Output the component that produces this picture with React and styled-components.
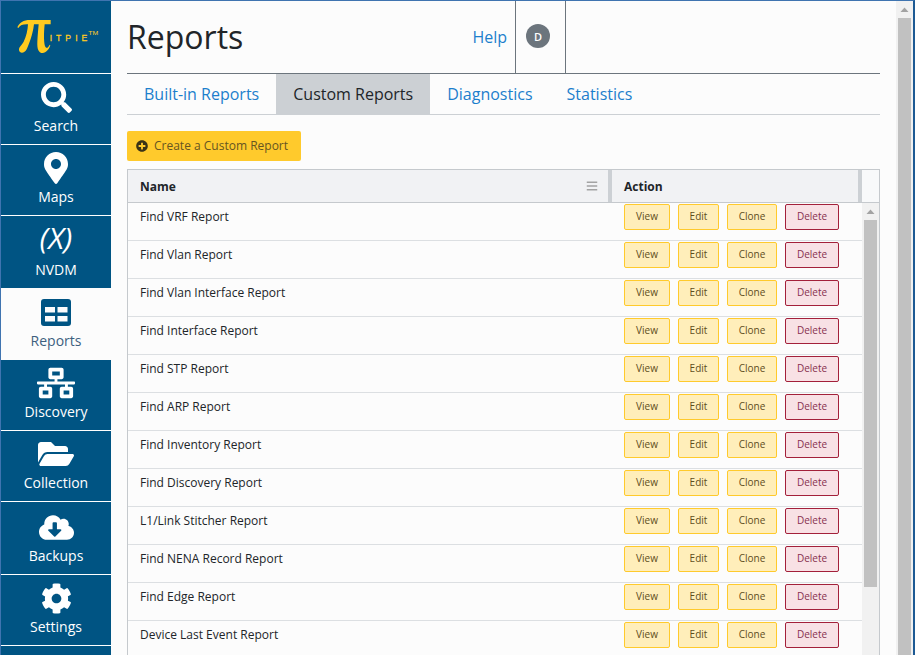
import React from "react";
import styled, { createGlobalStyle } from "styled-components";
import {
  FaSearch,
  FaMapMarkerAlt,
  FaNetworkWired,
  FaFolderOpen,
  FaCloudDownloadAlt,
  FaCog,
  FaPlusCircle,
  FaBars,
} from "react-icons/fa";

const reports = [
  "Find VRF Report",
  "Find Vlan Report",
  "Find Vlan Interface Report",
  "Find Interface Report",
  "Find STP Report",
  "Find ARP Report",
  "Find Inventory Report",
  "Find Discovery Report",
  "L1/Link Stitcher Report",
  "Find NENA Record Report",
  "Find Edge Report",
  "Device Last Event Report",
];

const GlobalStyle = createGlobalStyle`
  html, body {
    margin: 0;
    height: 100%;
    overflow: hidden;
    background: #fcfcfc;
    font-family: "Open Sans", "Liberation Sans", sans-serif;
  }
  * { box-sizing: border-box; }
`;

const Frame = styled.div`
  display: flex;
  height: 655px;
  overflow: hidden;
  border-top: 1px solid #3f74b0;
  border-left: 1px solid #3f74b0;
  border-right: 2px solid #1d5a94;
`;

const Sidebar = styled.nav`
  flex: 0 0 110px;
  background: #005483;
`;

const Logo = styled.div`
  height: 73px;
  padding: 9px 0 0 9px;
  border-bottom: 1px solid #fff;
  svg { display: block; }
`;

const NavItem = styled.a`
  display: flex;
  flex-direction: column;
  align-items: center;
  justify-content: flex-end;
  height: ${(p) => p.$h}px;
  padding-bottom: ${(p) => p.$pb || 8}px;
  border-bottom: 1px solid ${(p) => (p.$flat ? "transparent" : "#fff")};
  background: ${(p) => (p.$active ? "#fcfcfc" : "#005483")};
  color: ${(p) => (p.$active ? "#3d5f7f" : "#fff")};
  font-size: 14px;
  line-height: 20px;
`;

const NavIcon = styled.span`
  display: flex;
  align-items: center;
  justify-content: center;
  height: 32px;
  margin-bottom: 3px;
  color: ${(p) => (p.$active ? "#005483" : "#fff")};
`;

const Variable = styled.span`
  font-size: 30px;
  font-style: italic;
  line-height: 32px;
  margin-top: -6px;
`;

const Main = styled.main`
  flex: 1;
  min-width: 0;
  padding: 0 16px;
`;

// the browser scrollbar, drawn as a column beside what it scrolls
const ScrollBar = styled.div`
  flex: 0 0 17px;
  display: flex;
  flex-direction: column;
  background: #f1f1f1;
  color: #a3a3a3;
`;

const ScrollArrow = styled.svg`
  display: block;
  flex: 0 0 17px;
`;

const ScrollThumb = styled.div`
  height: ${(p) => p.$h}px;
  margin: 0 2px;
  background: #c1c1c1;
`;

const Header = styled.header`
  display: flex;
  align-items: stretch;
  height: 73px;
  border-bottom: 1px solid #6c757d;
  padding-right: 314px;
`;

const Title = styled.h1`
  margin: 0 auto 0 0;
  font-size: 32px;
  font-weight: 400;
  line-height: 72px;
  color: #212529;
`;

const HelpLink = styled.a`
  align-self: center;
  font-size: 16px;
  color: #1c7fcc;
  margin-right: 8px;
`;

const UserCell = styled.div`
  display: flex;
  justify-content: center;
  width: 51px;
  padding: 23px 5px 0 0;
  border-left: 1px solid #6c757d;
  border-right: 1px solid #6c757d;
`;

const Avatar = styled.span`
  display: flex;
  align-items: center;
  justify-content: center;
  width: 24px;
  height: 24px;
  border-radius: 50%;
  background: #6c757d;
  color: #fff;
  font-size: 11px;
  font-weight: 600;
`;

const Tabs = styled.div`
  display: flex;
  height: 41px;
  border-bottom: 1px solid #ccd0d4;
`;

const Tab = styled.a`
  padding: 0 17px;
  font-size: 16px;
  line-height: 40px;
  background: ${(p) => (p.$active ? "#ccd0d4" : "transparent")};
  color: ${(p) => (p.$active ? "#212529" : "#1c7fcc")};
`;

const CreateButton = styled.button`
  display: flex;
  align-items: center;
  gap: 6px;
  height: 30px;
  margin-top: 16px;
  padding: 0 13px 1px 9px;
  border: 0;
  border-radius: 2px;
  background: #ffca2c;
  color: #665522;
  font-family: inherit;
  font-size: 12px;
  svg { color: #3b3316; }
`;

const Table = styled.section`
  margin-top: 8px;
  border: 1px solid #c5c9cd;
  border-bottom: 0;
`;

const HeadRow = styled.div`
  display: flex;
  height: 33px;
  background: #f8f9fa;
  border-bottom: 1px solid #c5c9cd;
`;

const HeadCell = styled.div`
  display: flex;
  align-items: center;
  justify-content: space-between;
  width: ${(p) => p.$w}px;
  padding: 0 10px 0 12px;
  background: #f1f2f4;
  border-right: 4px solid #ccd0d4;
  color: #212529;
  font-size: 12px;
  font-weight: 700;
  svg { color: #a3a3a3; }
`;

const Body = styled.div`
  display: flex;
  height: 475px;
`;

const RowList = styled.div`
  flex: 1;
  min-width: 0;
`;

const Row = styled.div`
  display: flex;
  height: 38px;
  border-bottom: 1px solid #dcdfe2;
`;

const NameCell = styled.div`
  width: 484px;
  padding: 5px 12px 0;
  font-size: 12px;
  line-height: 18px;
  color: #212529;
`;

const Actions = styled.div`
  display: flex;
  gap: 8px;
  padding: 1px 12px 0;
`;

const ActionButton = styled.button`
  width: ${(p) => p.$w}px;
  height: 26px;
  padding: 0 0 2px;
  border: 1px solid ${(p) => (p.$danger ? "#a3203a" : "#ffca2c")};
  border-radius: 2px;
  background: ${(p) => (p.$danger ? "#f8e1e5" : "#ffeeba")};
  color: ${(p) => (p.$danger ? "#87304f" : "#5e4d1c")};
  font-family: inherit;
  font-size: 10px;
`;

const UpArrow = () => (
  <ScrollArrow width="17" height="17" viewBox="0 0 17 17">
    <path d="M8.5 6.5 L12.5 11 H4.5 Z" fill="currentColor" />
  </ScrollArrow>
);

const ReportsIcon = () => (
  <svg width="30" height="27" viewBox="0 0 30 27">
    <rect width="30" height="27" rx="3" fill="#005483" />
    <g fill="#fcfcfc">
      <rect x="4" y="8" width="10" height="5.5" />
      <rect x="16.5" y="8" width="10" height="5.5" />
      <rect x="4" y="17" width="10" height="5.5" />
      <rect x="16.5" y="17" width="10" height="5.5" />
    </g>
  </svg>
);

const LogoMark = () => (
  <svg width="95" height="50" viewBox="0 0 285 150">
    <path
      fill="#ffcb1f"
      d="M22 52 C28 38 40 30 60 30 L122 30 L122 43 L104 43 C101 70 101 105 107 112 C111 116 115 112 119 104 L121 106 C117 118 108 129 98 129 C85 129 81 116 82 95 C83 75 85 55 86 43 L72 43 C68 75 58 100 50 118 C44 130 29 132 27 120 C26 111 35 106 41 95 C49 80 53 60 54 43 L50 43 C38 43 30 46 25 54 Z"
    />
    <text x="119" y="94" fill="#ffcb1f" stroke="#ffcb1f" strokeWidth="0.8" fontFamily="Liberation Sans" fontSize="26" textLength="113" lengthAdjust="spacing">
      ITPIE
    </text>
    <text x="235" y="76" fill="#ffcb1f" fontFamily="Liberation Sans" fontSize="14" textLength="30" lengthAdjust="spacingAndGlyphs">
      TM
    </text>
  </svg>
);

const nav = [
  { label: "Search", h: 71, icon: <FaSearch size={31} /> },
  { label: "Maps", h: 71, icon: <FaMapMarkerAlt size={32} /> },
  { label: "NVDM", h: 72, pb: 7, flat: true, icon: <Variable>(X)</Variable> },
  { label: "Reports", h: 72, flat: true, active: true, icon: <ReportsIcon /> },
  { label: "Discovery", h: 71, icon: <FaNetworkWired size={38} /> },
  { label: "Collection", h: 71, icon: <FaFolderOpen size={36} /> },
  { label: "Backups", h: 73, icon: <FaCloudDownloadAlt size={35} /> },
  { label: "Settings", h: 71, icon: <FaCog size={31} /> },
];

const App = () => {
  return (
    <Frame>
      <GlobalStyle />
      <Sidebar>
        <Logo>
          <LogoMark />
        </Logo>
        {nav.map((item) => (
          <NavItem key={item.label} $h={item.h} $pb={item.pb} $flat={item.flat} $active={item.active}>
            <NavIcon $active={item.active}>{item.icon}</NavIcon>
            {item.label}
          </NavItem>
        ))}
      </Sidebar>
      <Main>
        <Header>
          <Title>Reports</Title>
          <HelpLink>Help</HelpLink>
          <UserCell>
            <Avatar>D</Avatar>
          </UserCell>
        </Header>
        <Tabs>
          <Tab>Built-in Reports</Tab>
          <Tab $active>Custom Reports</Tab>
          <Tab>Diagnostics</Tab>
          <Tab>Statistics</Tab>
        </Tabs>
        <CreateButton>
          <FaPlusCircle size={12} />
          Create a Custom Report
        </CreateButton>
        <Table>
          <HeadRow>
            <HeadCell $w={484}>
              Name
              <FaBars size={12} />
            </HeadCell>
            <HeadCell $w={250}>Action</HeadCell>
          </HeadRow>
          <Body>
            <RowList>
              {reports.map((name) => (
                <Row key={name}>
                  <NameCell>{name}</NameCell>
                  <Actions>
                    <ActionButton $w={46}>View</ActionButton>
                    <ActionButton $w={41}>Edit</ActionButton>
                    <ActionButton $w={50}>Clone</ActionButton>
                    <ActionButton $w={54} $danger>
                      Delete
                    </ActionButton>
                  </Actions>
                </Row>
              ))}
            </RowList>
            <ScrollBar>
              <UpArrow />
              <ScrollThumb $h={367} />
            </ScrollBar>
          </Body>
        </Table>
      </Main>
      <ScrollBar>
        <UpArrow />
        <ScrollThumb $h={660} />
      </ScrollBar>
    </Frame>
  );
};

export default App;
